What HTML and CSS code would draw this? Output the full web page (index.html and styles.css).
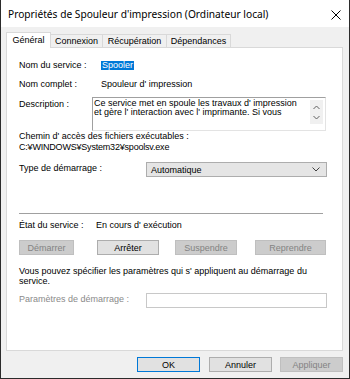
FILE: index.html
```html
<!DOCTYPE html>
<html lang="fr">
<head>
<meta charset="utf-8">
<link rel="stylesheet" href="styles.css">
</head>
<body>
<div class="window">
  <div class="titlebar">
    <span class="title">Propriétés de Spouleur d'impression (Ordinateur local)</span>
    <svg class="close" width="10" height="10" viewBox="0 0 10 10"><path d="M0.5 0.5 L9.5 9.5 M9.5 0.5 L0.5 9.5" stroke="#000" stroke-width="1" fill="none"/></svg>
  </div>
  <div class="content">
    <div class="tabs">
      <div class="tab active t1">Général</div>
      <div class="tab t2">Connexion</div>
      <div class="tab t3">Récupération</div>
      <div class="tab t4">Dépendances</div>
    </div>
    <div class="panel">
      <div class="row r1"><span class="label">Nom du service :</span><span class="sel">Spooler</span></div>
      <div class="row r2"><span class="label">Nom complet :</span><span class="value">Spouleur d' impression</span></div>
      <div class="descrow">
        <span class="label dlabel">Description :</span>
        <div class="textarea">
          <div class="ttext">Ce service met en spoule les travaux d' impression<br>et gère l' interaction avec l' imprimante. Si vous</div>
          <div class="scroll">
            <svg width="7" height="5" viewBox="0 0 7 5"><path d="M0.5 4 L3.5 1 L6.5 4" stroke="#606060" fill="none"/></svg>
            <svg width="7" height="5" viewBox="0 0 7 5"><path d="M0.5 1 L3.5 4 L6.5 1" stroke="#606060" fill="none"/></svg>
          </div>
        </div>
      </div>
      <div class="line path1">Chemin d' accès des fichiers exécutables :</div>
      <div class="line path2">C:¥WINDOWS¥System32¥spoolsv.exe</div>
      <div class="typerow">
        <span class="label tlabel">Type de démarrage :</span>
        <div class="select"><span>Automatique</span>
          <svg width="8" height="5" viewBox="0 0 8 5"><path d="M0.5 0.5 L4 4 L7.5 0.5" stroke="#404040" fill="none"/></svg>
        </div>
      </div>
      <div class="sep"></div>
      <div class="row state"><span class="slabel">État du service :</span><span>En cours d' exécution</span></div>
      <div class="btnrow">
        <div class="btn disabled b1">Démarrer</div>
        <div class="btn b2">Arrêter</div>
        <div class="btn disabled b3">Suspendre</div>
        <div class="btn disabled b4">Reprendre</div>
      </div>
      <div class="para">Vous pouvez spécifier les paramètres qui s' appliquent au démarrage du<br>service.</div>
      <div class="paramrow">
        <span class="label plabel">Paramètres de démarrage :</span>
        <div class="input"></div>
      </div>
    </div>
    <div class="footer">
      <div class="btn fbtn ok">OK</div>
      <div class="btn fbtn">Annuler</div>
      <div class="btn fbtn disabled">Appliquer</div>
    </div>
  </div>
</div>
</body>
</html>
```

FILE: styles.css
```css
* { box-sizing: border-box; }
html, body { margin: 0; padding: 0; }
body { width: 350px; height: 379px; overflow: hidden; background: #f0f0f0; font-family: "Liberation Sans", Arial, sans-serif; font-size: 9px; color: #000; }
.window { width: 350px; height: 379px; border: 1px solid #2b2b2b; border-top: none; background: #f0f0f0; display: flex; flex-direction: column; }
.titlebar { height: 27px; background: #fff; display: flex; align-items: center; justify-content: space-between; padding: 1px 8px 0 7px; }
.title { font-family: "Noto Sans", "Open Sans", sans-serif; font-size: 10.2px; color: #000; }
.close { display: block; margin-top: 1px; }
.content { padding: 5px 6px 0 5px; }
.tabs { display: flex; align-items: flex-end; height: 15px; position: relative; z-index: 1; }
.tab { height: 13px; border: 1px solid #d9d9d9; border-bottom: none; background: #f0f0f0; display: flex; align-items: center; justify-content: center; line-height: 12px; margin-left: -1px; }
.tab.active { height: 16px; background: #fff; margin-bottom: -1px; margin-left: 0; padding-bottom: 1px; }
.t1 { width: 45px; }
.t2 { width: 53px; }
.t3 { width: 65px; }
.t4 { width: 65px; }
.panel { width: 337px; height: 304px; background: #fff; border: 1px solid #d9d9d9; padding: 11px 0 0 12px; }
.row { height: 12px; line-height: 12px; display: flex; align-items: center; }
.label { width: 82px; flex: none; }
.sel { background: #0078d7; color: #fff; height: 9px; line-height: 9px; padding: 0 1px; margin-left: 0; }
.r2 { margin-top: 7px; }
.descrow { display: flex; margin-top: 7px; height: 33px; }
.dlabel { width: 73px; padding-top: 1px; line-height: 12px; }
.textarea { width: 234px; height: 34px; border: 1px solid #a0a0a0; border-bottom-color: #e3e3e3; border-right-color: #e3e3e3; display: flex; justify-content: space-between; }
.ttext { padding: 1px 0 0 1px; line-height: 9px; font-size: 9px; white-space: nowrap; }
.scroll { width: 13px; margin: 2px 2px 0 0; height: 24px; background: #f0f0f0; display: flex; flex-direction: column; align-items: center; justify-content: space-around; padding: 2px 0; flex: none; }
.scroll svg { display: block; }
.line { height: 11px; line-height: 11px; }
.path1 { margin-top: 1px; }
.path2 { letter-spacing: -0.2px; }
.typerow { display: flex; margin-top: 9px; height: 15px; }
.tlabel { width: 127px; line-height: 12px; }
.select { width: 181px; height: 15px; background: #e5e5e5; border: 1px solid #adadad; display: flex; align-items: center; justify-content: space-between; padding: 0 6px 0 4px; }
.sep { width: 304px; height: 1px; background: #a0a0a0; margin-top: 36px; }
.state { margin-top: 5px; }
.slabel { width: 77px; flex: none; }
.btnrow { display: flex; margin-top: 9px; height: 15px; }
.btn { height: 15px; border: 1px solid #adadad; background: #e1e1e1; display: flex; align-items: center; justify-content: center; }
.btn.disabled { background: #cccccc; border-color: #bfbfbf; color: #838383; }
.b1 { width: 55px; margin-left: 0; }
.b2 { width: 62px; margin-left: 23px; }
.b3 { width: 62px; margin-left: 16px; }
.b4 { width: 71px; margin-left: 18px; }
.para { margin-top: 11px; line-height: 10px; }
.paramrow { display: flex; margin-top: 7px; height: 15px; }
.plabel { width: 127px; color: #8a8a8a; line-height: 13px; }
.input { width: 181px; height: 15px; border: 1px solid #c8c8c8; background: #fff; }
.footer { display: flex; justify-content: flex-end; gap: 8px; margin-top: 6px; padding-right: 0; }
.fbtn { width: 63px; height: 15px; }
.fbtn.ok { border: 1px solid #0078d7; margin-right: 1px; }
```
